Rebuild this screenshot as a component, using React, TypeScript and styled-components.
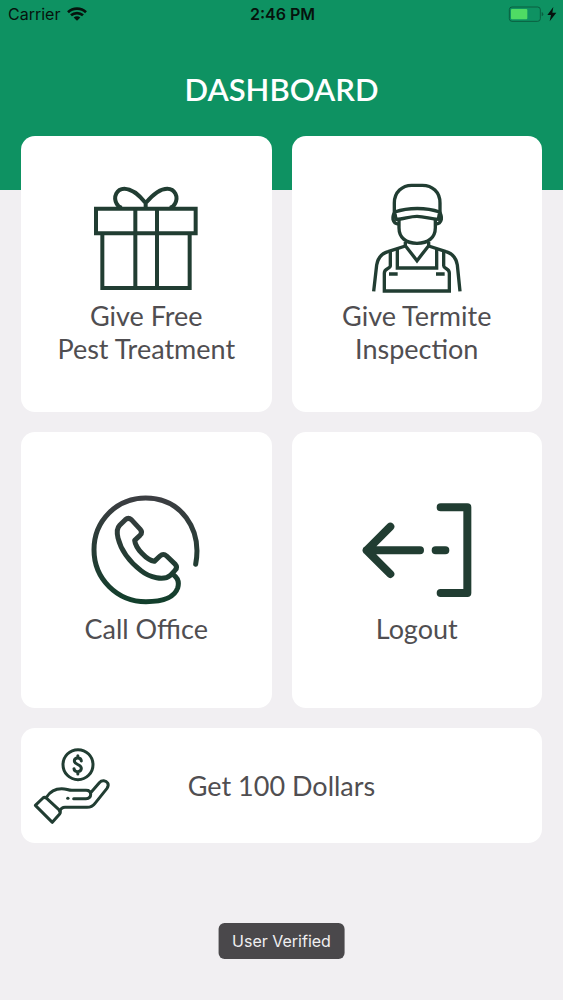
import React from "react";
import styled, { createGlobalStyle } from "styled-components";

const INK = "#213d32";

const GlobalStyle = createGlobalStyle`
  *, *::before, *::after { box-sizing: border-box; }
  body {
    margin: 0;
    background: #f1eff2;
    font-family: Lato, "Liberation Sans", sans-serif;
  }
`;

const Screen = styled.div`
  min-height: 100vh;
`;

const Header = styled.header`
  height: 190px;
  background: #0e9262;
`;

const StatusBar = styled.div`
  display: grid;
  grid-template-columns: 1fr auto 1fr;
  align-items: center;
  height: 28px;
  padding: 0 6px 0 8px;
  color: #06130d;
  font-family: Inter, "Liberation Sans", sans-serif;
  font-size: 16px;
  line-height: 20px;
`;

const Carrier = styled.div`
  display: flex;
  align-items: center;
  gap: 7px;
`;

const Clock = styled.time`
  font-weight: 600;
`;

const Power = styled.div`
  display: flex;
  align-items: center;
  justify-content: flex-end;
`;

const Title = styled.h1`
  margin: 41px 0 0;
  color: #fff;
  font-size: 31px;
  font-weight: 600;
  line-height: 40px;
  text-align: center;
`;

const Tiles = styled.main`
  display: grid;
  grid-template-columns: 1fr 1fr;
  gap: 20px;
  margin-top: -54px;
  padding: 0 21px 157px;
`;

const Card = styled.button`
  border: 0;
  border-radius: 14px;
  background: #fff;
  color: #504e51;
  font-family: inherit;
  font-size: 27px;
  line-height: 33px;
  cursor: pointer;
`;

const Tile = styled(Card)`
  display: flex;
  flex-direction: column;
  align-items: center;
  justify-content: center;
  gap: 5px;
  min-height: 276px;
  padding: 16px 16px 17px;
`;

const WideTile = styled(Card)`
  display: grid;
  grid-column: 1 / -1;
  grid-template-columns: 80px 1fr 80px;
  align-items: center;
  min-height: 115px;
  padding: 0 11px;
`;

const Line = styled.span`
  display: block;
`;

const Glyph = styled.svg<{ $size: number; $weight: number }>`
  flex: none;
  width: ${(p) => p.$size}px;
  height: ${(p) => p.$size}px;
  fill: none;
  stroke: ${INK};
  stroke-width: ${(p) => p.$weight};
`;

const Toast = styled.div`
  position: fixed;
  bottom: 41px;
  left: 50%;
  transform: translateX(-50%);
  padding: 8px 14px;
  border-radius: 6px;
  background: #4a484b;
  color: #f0eff1;
  font-family: Inter, "Liberation Sans", sans-serif;
  font-size: 16px;
  line-height: 20px;
  white-space: nowrap;
`;

const WifiIcon = () => (
  <svg width="20" height="14" viewBox="0 0 60 42" fill="none" stroke="#06130d" strokeWidth="8" aria-hidden="true">
    <path d="M3 15.500C18 1.500 42 1.500 57 15.500" />
    <path d="M12 25C22 16 38 16 48 25" />
    <path d="M30 41L20 31.500C26 26.500 34 26.500 40 31.500Z" fill="#06130d" stroke="none" />
  </svg>
);

const BatteryIcon = () => (
  <svg width="50" height="18" viewBox="0 0 150 54" aria-hidden="true">
    <rect x="7" y="6" width="93" height="43" rx="8" fill="none" stroke="#0a5e40" strokeWidth="3" />
    <rect x="12" y="12" width="49" height="31" rx="3" fill="#4fdb64" />
    <path d="M104 21Q109 23 109 27.500T104 34Z" fill="#0a5e40" />
    <path d="M139 6L121 30H132L128 49L148 23H136Z" fill="#06130d" />
  </svg>
);

const GiftIcon = () => (
  <Glyph viewBox="31 21 336 336" $size={112} $weight={12} aria-hidden="true">
    <path d="M49 101H348V175H49Z" />
    <path d="M68 175V339H330V175" />
    <path d="M167 101V339M232 101V339" />
    <path d="M198 100V84C184 66 158 41 134 41C111 41 100 66 111 86Q115 95 126 99M198 84C213 66 239 41 263 41C286 41 297 66 286 86Q282 95 271 99" />
  </Glyph>
);

const WorkerIcon = () => (
  <Glyph viewBox="3 21 336 336" $size={112} $weight={10} aria-hidden="true">
    <path d="M103 116V84C103 51 127 31 155 31H187C217 31 240 51 240 84V116" />
    <path d="M104 111C145 97 199 97 239 111L235 133C213 133 195 124 171 124C148 124 130 133 108 133Z" strokeLinejoin="round" />
    <path d="M104 113Q98 120 99 133Q102 147 117 147M239 113Q245 120 244 133Q241 147 226 147" />
    <path d="M117 132V158C117 187 137 205 171 205C205 205 226 187 226 158V132" />
    <path d="M136 201V212L171 257L206 212V201" />
    <path d="M41 349L50 270C54 245 67 235 84 230L136 213M206 213L258 230C275 235 288 245 292 270L300 349" />
    <path d="M112 221V279H230V221M91 229V272C91 282 73 279 73 294V348H268V294C268 279 251 282 251 272V229" />
    <path d="M87 297H113M228 297H254" />
  </Glyph>
);

const PhoneIcon = () => (
  <Glyph viewBox="31 28 336 336" $size={112} $weight={15} strokeLinecap="round" strokeLinejoin="round" aria-hidden="true">
    <defs>
      <linearGradient id="ring" gradientUnits="userSpaceOnUse" x1="0" y1="35" x2="0" y2="350">
        <stop offset="0" stopColor="#3c3e42" />
        <stop offset="0.500" stopColor="#273c35" />
        <stop offset="1" stopColor="#123f2c" />
      </linearGradient>
    </defs>
    <g stroke="url(#ring)">
      <path d="M348 236C368 129 303 37 198 37C111 37 43 105 43 192C43 280 113 348 199 348C246 348 284 336 294 307C300 287 293 276 282 268" />
      <path d="M120 119L137 102Q146 94 155 102L182 131Q190 140 181 149L165 164C168 189 202 224 224 227L241 211Q251 202 261 211L287 236Q295 245 286 254L272 269C253 286 210 276 184 255C151 229 124 194 115 157C111 140 111 128 120 119Z" />
    </g>
  </Glyph>
);

const LogoutIcon = () => (
  <Glyph viewBox="33 13 336 336" $size={112} $weight={24} strokeLinecap="round" strokeLinejoin="round" aria-hidden="true">
    <path d="M121 108L50 179L121 250M50 179H210M257 179H286" />
    <path d="M272 50H352V307H272" />
  </Glyph>
);

const HandIcon = () => (
  <Glyph viewBox="36 62 240 240" $size={80} $weight={9} strokeLinecap="round" strokeLinejoin="round" aria-hidden="true">
    <circle cx="174" cy="118" r="45" />
    <path d="M184 107C183 95 163 95 163 107C163 119 184 116 184 129C184 142 163 142 162 130M173.500 91V98M173.500 139V146" />
    <path d="M80 215C88 202 103 190 125 190C140 190 143 195 156 195H198C208 195 212 200 212 207C212 216 207 220 198 220H161" />
    <path d="M212 202L238 172C246 163 258 165 263 173Q267 180 261 189L225 234Q216 246 201 246H135Q124 246 119 258" />
    <path d="M46 240L69 218Q74 214 80 219L119 255Q123 260 119 266L97 291Z" />
    <path d="M143 219H144" />
  </Glyph>
);

const TILES = [
  { lines: ["Give Free", "Pest Treatment"], Icon: GiftIcon },
  { lines: ["Give Termite", "Inspection"], Icon: WorkerIcon },
  { lines: ["Call Office"], Icon: PhoneIcon },
  { lines: ["Logout"], Icon: LogoutIcon },
];

export default function App() {
  return (
    <Screen>
      <GlobalStyle />
      <Header>
        <StatusBar>
          <Carrier>
            Carrier
            <WifiIcon />
          </Carrier>
          <Clock>2:46 PM</Clock>
          <Power>
            <BatteryIcon />
          </Power>
        </StatusBar>
        <Title>DASHBOARD</Title>
      </Header>
      <Tiles>
        {TILES.map(({ lines, Icon }) => (
          <Tile key={lines[0]} type="button">
            <Icon />
            <span>
              {lines.map((line) => (
                <Line key={line}>{line}</Line>
              ))}
            </span>
          </Tile>
        ))}
        <WideTile type="button">
          <HandIcon />
          <span>Get 100 Dollars</span>
        </WideTile>
      </Tiles>
      <Toast role="status">User Verified</Toast>
    </Screen>
  );
}
